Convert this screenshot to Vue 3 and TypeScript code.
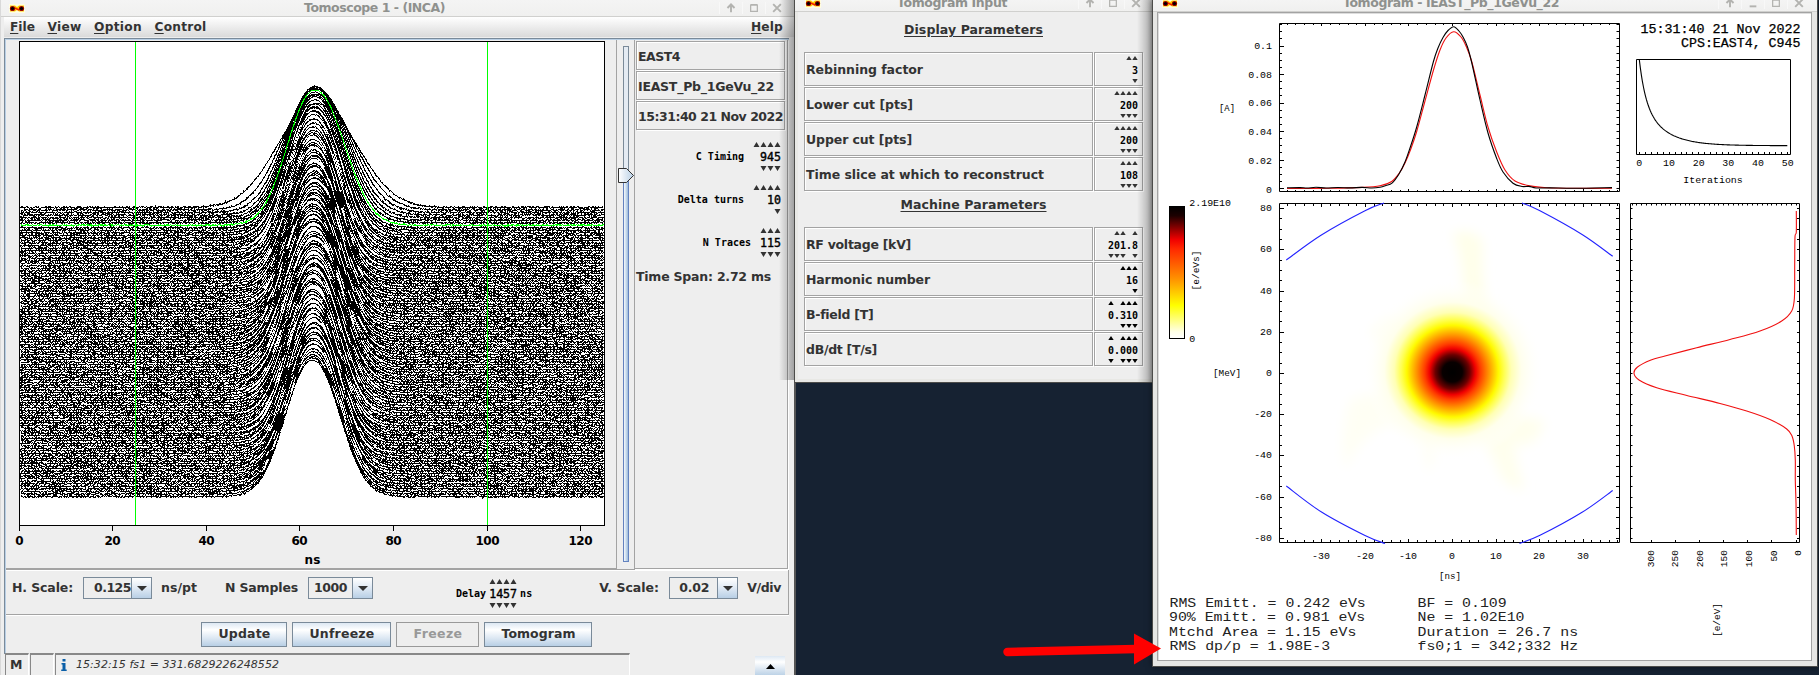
<script setup lang="ts">
type Pt = [number, number]

// Adjusts letter spacing so a label takes its nominal width in pixels.
const vFit = {
  mounted(el: HTMLElement, binding: { value: number }) {
    const n = (el.textContent || '').length
    const w = el.getBoundingClientRect().width
    if (n > 0) el.style.letterSpacing = `${(binding.value - w) / n}px`
  },
}

function makeRandom(seed: number) {
  let s = seed
  return () => {
    s = (s * 1664525 + 1013904223) % 4294967296
    return s / 4294967296
  }
}

// ---- waterfall display ----
const TRACES = 115
const GREEN = 7
const rnd = makeRandom(945)

// Small shot-to-shot variations of each trace.
const jitter = Array.from({ length: TRACES }, (_, i) => {
  const k = i < 10 || i > TRACES - 3 ? 0 : 1
  return { h: (rnd() - 0.5) * 4 * k, c: (rnd() - 0.5) * 0.9 * k, s: (rnd() - 0.5) * 0.9 * k }
})

function level(i: number, x: number): { y: number; g: number } {
  const base = 207 + i * 2.535
  const j = jitter[i]
  const early = Math.exp(-i / 2.2)
  const phase = (i / 62) * Math.PI * 2
  const centre = 313.6 + 2.5 * early + 0.8 * Math.sin(phase * 2) - i / TRACES + j.c
  const height = 135.5 - 33 * early + 1.2 * Math.cos(phase) + j.h
  const sl = 25.4 + 11.5 * Math.exp(-i / 1.6) + 1.2 * Math.cos(phase) + j.s
  const sr = 26 + 12 * Math.exp(-i / 3.6) + 1.2 * Math.cos(phase) + j.s
  const dx = x - centre
  const g = Math.exp(-Math.pow(Math.abs(dx) / ((dx < 0 ? sl : sr) * 1.414), 2.12))
  return { y: base - height * g, g }
}
function trace(i: number): string {
  let d = ''
  for (let k = 0; k < 1000; k++) {
    const x = 20 + Math.floor(k * 0.584)
    const { y, g } = level(i, x)
    const noise = (rnd() + rnd() - 1) * (i === GREEN ? 1 : 1.55) * (1 - Math.sqrt(g) * 0.6)
    d += `${k ? 'L' : 'M'}${x}.5 ${Math.round(y + noise)}.5`
  }
  return d
}
// Gap left open between two neighbouring traces on the steep flanks.
function gap(i: number): string {
  let d = ''
  let on = false
  let left = 0
  for (let x = 250; x < 380; x++) {
    if (left-- <= 0) {
      on = !on
      left = on ? 2 + rnd() * 8 : 1 + rnd() * 5
      if (on) d += `M${x}.5 ${Math.round(level(i, x).y + 1.3)}.5`
    } else if (on) d += `L${x}.5 ${Math.round(level(i, x).y + 1.3)}.5`
  }
  return d
}
const layers: { d: string; c: string }[] = []
for (let i = 0; i < TRACES; i++) {
  if (i === GREEN) continue
  layers.push({ d: trace(i), c: '#000' })
}
const GAP_STEPS = [3, 2, 4, 3, 2, 4, 5]
for (let i = 14, k = 0; i < TRACES - 2; i += GAP_STEPS[k++ % 7]) layers.push({ d: gap(i), c: '#fff' })
const greenTrace = trace(GREEN)

const scopeTicks = [
  { x: 19.5, t: '0' }, { x: 112.5, t: '20' }, { x: 206.5, t: '40' }, { x: 299.5, t: '60' },
  { x: 393.5, t: '80' }, { x: 487.5, t: '100' }, { x: 580.5, t: '120' },
]

const fields = [
  { t: 'EAST4', w: 42 }, { t: 'IEAST_Pb_1GeVu_22', w: 136 }, { t: '15:31:40 21 Nov 2022', w: 145 },
]
const dials = [
  { label: 'C Timing', value: '945', n: 4, up: '1111', down: '0111' },
  { label: 'Delta turns', value: '10', n: 4, up: '1111', down: '0001' },
  { label: 'N Traces', value: '115', n: 3, up: '111', down: '111' },
]

// ---- parameter window ----
const groups = [
  {
    title: 'Display Parameters', w: 139,
    rows: [
      { t: 'Rebinning factor', w: 117, v: '3', up: '11', down: '01', dark: false },
      { t: 'Lower cut [pts]', w: 107, v: '200', up: '1111', down: '0111', dark: false },
      { t: 'Upper cut [pts]', w: 106, v: '200', up: '1111', down: '0111', dark: false },
      { t: 'Time slice at which to reconstruct', w: 238, v: '108', up: '111', down: '111', dark: false },
    ],
  },
  {
    title: 'Machine Parameters', w: 146,
    rows: [
      { t: 'RF voltage [kV]', w: 105, v: '201.8', up: '01101', down: '11101', dark: false },
      { t: 'Harmonic number', w: 124, v: '16', up: '111', down: '001', dark: true },
      { t: 'B-field [T]', w: 67, v: '0.310', up: '10111', down: '00111', dark: true },
      { t: 'dB/dt [T/s]', w: 71, v: '0.000', up: '10111', down: '10111', dark: true },
    ],
  },
]

function arrows(mask: string, pitch: number, up: boolean, w: number, h: number): string {
  let d = ''
  for (let i = 0; i < mask.length; i++) {
    if (mask[i] !== '1') continue
    const x = i * pitch + (pitch - w) / 2
    d += up
      ? `M${x} ${h}L${x + w / 2} 0L${x + w} ${h}Z`
      : `M${x} 0L${x + w} 0L${x + w / 2} ${h}Z`
  }
  return d
}

// ---- tomogram plots ----
function smooth(p: Pt[]): string {
  let d = `M${p[0][0]} ${p[0][1]}`
  for (let i = 0; i < p.length - 1; i++) {
    const a = p[Math.max(0, i - 1)]
    const b = p[i]
    const c = p[i + 1]
    const e = p[Math.min(p.length - 1, i + 2)]
    d += `C${b[0] + (c[0] - a[0]) / 6} ${b[1] + (c[1] - a[1]) / 6} ${c[0] - (e[0] - b[0]) / 6} ${c[1] - (e[1] - b[1]) / 6} ${c[0]} ${c[1]}`
  }
  return d
}

const redProfile = smooth([
  [1287, 188.5], [1330, 188.3], [1363, 187.4], [1380, 185.8], [1391.7, 181.5], [1399, 173.5], [1405, 163],
  [1411, 148.5], [1416.7, 131.5], [1425, 101], [1433.5, 70], [1440, 50], [1446, 38], [1453.7, 31.7],
  [1461, 37], [1466, 46], [1471.7, 61.5], [1480, 95], [1488, 127], [1496.7, 152], [1505, 170],
  [1515, 181], [1530, 185.9], [1547, 187.7], [1575, 188.3], [1612, 188.3],
])
const blackProfile = smooth([
  [1287, 187.8], [1300, 187.6], [1307, 188], [1316, 187.3], [1326, 188], [1338, 187.5], [1350, 187.9], [1362, 187.4],
  [1372, 188], [1380, 187.2], [1386, 185.5], [1392, 183.2], [1399, 174], [1405, 162], [1410, 148], [1416.7, 127],
  [1425, 95], [1433.3, 62], [1438, 48], [1443, 37.5], [1448, 30.5], [1453.7, 26.7], [1459, 31],
  [1463.3, 37.5], [1467.5, 47], [1471.7, 62.5], [1480, 100], [1488, 133], [1496.7, 158.5], [1503, 172], [1513, 183.2],
  [1522, 186.5], [1529, 186.4], [1536, 188], [1550, 187.9], [1575, 188.3], [1612, 187.6],
])
const energyProfile = smooth([
  [1796.3, 211], [1796.3, 232], [1795, 237], [1794.7, 265], [1794.4, 298], [1791.7, 311], [1781.7, 321], [1760, 331],
  [1730, 339.5], [1696.7, 347.7], [1665, 356], [1651, 360], [1637.5, 367], [1634, 373.3], [1639, 380], [1656.7, 387.7],
  [1686, 395.2], [1720, 403.5], [1746.7, 411], [1770, 419.5], [1786.7, 429], [1792, 436], [1794.3, 446],
  [1795.3, 460], [1795.3, 480], [1796, 503], [1796.3, 535],
])
const convergence = 'M' + Array.from({ length: 149 }, (_, x) =>
  `${1639.3 + x} ${(145.7 - 86.2 * (0.45 * Math.exp(-x / 6) + 0.55 * Math.exp(-x / 22))).toFixed(2)}`).join('L')
const separatrix = [
  smooth([[1286.3, 260], [1321, 235.2], [1365, 210.7], [1384, 203]]),
  smooth([[1522, 203], [1539.5, 210.5], [1582.5, 234.7], [1612.7, 256.3]]),
  smooth([[1286.3, 486], [1321.5, 512], [1365, 535.5], [1385, 543.5]]),
  smooth([[1519.5, 543.5], [1540, 535.3], [1582.5, 512], [1612.7, 490.5]]),
]

const nsX = (v: number) => Math.round(1452 + v * 4.352) + 0.5
const mevY = (v: number) => Math.round(373 - v * 2.062) + 0.5
let ticks = ''
for (let v = -38; v <= 38; v += 2) {
  const x = nsX(v)
  const l = v % 10 === 0 ? 3 : 2
  ticks += `M${x} 24v${l - 1}M${x} 191v${-l + 1}M${x} 204v${l}M${x} 542v${-l}`
}
for (let v = -80; v <= 80; v += 5) {
  const y = mevY(v)
  const l = v % 20 === 0 ? 4 : 2
  ticks += `M1280 ${y}h${l}M1619 ${y}h-3M1631 ${y}h1.5M1799 ${y}h-2`
}
for (let k = 0; k <= 23; k++) {
  const y = Math.round(188 - k * 7.12) + 0.5
  ticks += `M1280 ${y}h${k % 4 === 0 ? 4 : 2}M1619 ${y}h-2.5`
}
for (let k = 0; k <= 34; k++) ticks += `M${Math.round(1795.5 - k * 4.82) + 0.5} 204v1.5`
for (let k = 0; k <= 6; k++) ticks += `M${Math.round(1795.5 - k * 24.1) + 0.5} 542v-2`
for (let k = 0; k <= 25; k++) ticks += `M${Math.round(1639 + k * 5.93) + 0.5} 154v-2`

type Lab = { x: number; y: number; t: string; w: number; a: string }
const small = (x: number, y: number, t: string, a: string): Lab => ({ x, y, t, w: t.length * 5.95, a })
const labels: Lab[] = [
  small(1272, 46, '0.1', 'end'), small(1272, 75, '0.08', 'end'), small(1272, 103, '0.06', 'end'),
  small(1272, 132, '0.04', 'end'), small(1272, 161, '0.02', 'end'), small(1272, 190, '0', 'end'),
  ...[80, 60, 40, 20, 0, -20, -40, -60, -80].map((v) => small(1272, mevY(v), String(v), 'end')),
  ...[-30, -20, -10].map((v) => small(nsX(v) - 0.5, 556, String(v), 'middle')),
  ...[0, 10, 20, 30].map((v) => small(nsX(v) - 0.5, 556, String(v), 'middle')),
  ...[0, 10, 20, 30, 40, 50].map((v) => small(1639.3 + v * 2.967, 163, String(v), 'middle')),
  small(1713, 180, 'Iterations', 'middle'),
  small(1189.3, 203, '2.19E10', 'start'), small(1189.3, 339, '0', 'start'),
]
const units: Lab[] = [
  { x: 1227, y: 108.5, t: '[A]', w: 16, a: 'middle' },
  { x: 1227, y: 373.5, t: '[MeV]', w: 28, a: 'middle' },
  { x: 1450, y: 576.5, t: '[ns]', w: 22, a: 'middle' },
]
const vertical = [
  { x: 1651.5, y: 558.7, t: '300', w: 17 }, { x: 1675.5, y: 558.7, t: '250', w: 17 },
  { x: 1700, y: 558.7, t: '200', w: 17 }, { x: 1724.5, y: 558.7, t: '150', w: 17 },
  { x: 1749, y: 558.7, t: '100', w: 17 }, { x: 1774, y: 556, t: '50', w: 11 }, { x: 1798.5, y: 553, t: '0', w: 5.5 },
  { x: 1196, y: 270.5, t: '[e/eVs]', w: 40 }, { x: 1717, y: 620, t: '[e/eV]', w: 34 },
]
const stats = [
  { x: 1169.5, y: 603, t: 'RMS Emitt. = 0.242 eVs' }, { x: 1169, y: 617, t: '90% Emitt. = 0.981 eVs' },
  { x: 1169, y: 632, t: 'Mtchd Area = 1.15 eVs' }, { x: 1169.5, y: 646, t: 'RMS dp/p = 1.98E-3' },
  { x: 1417.5, y: 603, t: 'BF = 0.109' }, { x: 1417.5, y: 617, t: 'Ne = 1.02E10' },
  { x: 1417.5, y: 632, t: 'Duration = 26.7 ns' }, { x: 1417.5, y: 646, t: 'fs0;1 = 342;332 Hz' },
]
const windows = [
  { id: 'scope', title: 'Tomoscope 1 - (INCA)', w: 141, min: false },
  { id: 'input', title: 'Tomogram Input', w: 110, min: false },
  { id: 'tomo', title: 'Tomogram - IEAST_Pb_1GeVu_22', w: 216, min: true },
]
</script>

<template>
  <div class="desktop">
    <section v-for="win in windows" :key="win.id" class="window" :class="win.id">
      <header class="titlebar">
        <svg class="logo" width="16" height="9" viewBox="0 0 16 9">
          <rect width="16" height="9" fill="#fffde0" />
          <path d="M1 1.5h5l2 1.5l2-1.5h5v6h-5l-2-1.5l-2 1.5h-5z" fill="#ffd000" />
          <path d="M6 4l4 2" stroke="#f52000" stroke-width="1.5" />
          <circle cx="3.5" cy="4.5" r="2.6" fill="#900" /><circle cx="12.5" cy="4.5" r="2.6" fill="#900" />
          <circle cx="3.5" cy="4.5" r="1.6" fill="#000" /><circle cx="12.5" cy="4.5" r="1.6" fill="#000" />
        </svg>
        <span class="title"><b v-fit="win.w">{{ win.title }}</b></span>
        <span class="wbtns">
          <svg width="23" height="12" viewBox="0 0 23 12"><path d="M11.5 2.2v8.3M7.8 6l3.7-3.7L15.2 6" /></svg>
          <svg v-if="win.min" width="23" height="12" viewBox="0 0 23 12"><path d="M8 9.5h7" /></svg>
          <svg width="23" height="12" viewBox="0 0 23 12"><path d="M8 3h7v6.500h-7zM8 2.500h7" stroke-width="1.300" /></svg>
          <svg width="23" height="12" viewBox="0 0 23 12"><path d="M7.500 2l8 8M15.500 2l-8 8" /></svg>
        </span>
      </header>

      <template v-if="win.id === 'scope'">
        <nav class="menu">
          <span v-fit="25"><u>F</u>ile</span>
          <span v-fit="34"><u>V</u>iew</span>
          <span v-fit="48"><u>O</u>ption</span>
          <span v-fit="52"><u>C</u>ontrol</span>
          <span v-fit="32" class="help"><u>H</u>elp</span>
        </nav>
        <div class="scope-body">
          <div class="upper">
            <svg class="wave" width="610" height="528" viewBox="6 40 610 528">
              <rect x="19.500" y="41.500" width="585" height="484" fill="#fff" stroke="#000" />
              <g fill="none" shape-rendering="crispEdges">
                <path v-for="(l, i) in layers" :key="i" :d="l.d" :stroke="l.c" />
              </g>
              <path :d="greenTrace" fill="none" stroke="#0f0" shape-rendering="crispEdges" />
              <path d="M135.500 42V525M487.500 42V525" stroke="#0f0" />
              <path d="M19.500 41V526M604.500 41V526" stroke="#000" />
              <g v-for="t in scopeTicks" :key="t.t">
                <path :d="`M${t.x} 526v5`" stroke="#000" />
                <text :x="t.x" y="545" text-anchor="middle" class="axis" :textLength="t.t.length * 8">{{ t.t }}</text>
              </g>
              <text x="312.500" y="564" text-anchor="middle" class="axis" textLength="16">ns</text>
            </svg>
            <svg class="slider" width="17" height="528" viewBox="617 40 17 528">
              <defs>
                <linearGradient id="thumb"><stop offset="0" stop-color="#fff" /><stop offset="1" stop-color="#b8cfe5" /></linearGradient>
                <linearGradient id="track"><stop offset="0" stop-color="#fff" /><stop offset=".4" stop-color="#d6e4f2" /><stop offset="1" stop-color="#8fb2d8" /></linearGradient>
              </defs>
              <rect x="623.500" y="46.500" width="5" height="515" fill="#e4ebf3" stroke="#7a8a99" />
              <rect x="623.500" y="176.500" width="5" height="385" fill="url(#track)" stroke="#6382bf" />
              <path d="M618.500 168.500h8l7 7l-7 7h-8z" fill="url(#thumb)" stroke="#333" />
            </svg>
            <div class="side">
              <div v-for="f in fields" :key="f.t" class="field"><span v-fit="f.w">{{ f.t }}</span></div>
              <div v-for="d in dials" :key="d.label" class="dial">
                <span class="dial-label">{{ d.label }}</span>
                <div class="digits">
                  <svg :width="d.n * 7" height="5"><path :d="arrows(d.up, 7, true, 6, 5)" /></svg>
                  <span class="num">{{ d.value }}</span>
                  <svg :width="d.n * 7" height="5"><path :d="arrows(d.down, 7, false, 6, 5)" /></svg>
                </div>
              </div>
              <div class="span"><span v-fit="135">Time Span: 2.72 ms</span></div>
            </div>
          </div>
          <div class="scales">
            <span v-fit="61" class="s1">H. Scale:</span>
            <div class="combo c1"><span v-fit="37">0.125</span><i><svg width="10" height="5"><path d="M0 0h10l-5 5z" /></svg></i></div>
            <span v-fit="36" class="s2">ns/pt</span>
            <span v-fit="73" class="s3">N Samples</span>
            <div class="combo c2"><span v-fit="33">1000</span><i><svg width="10" height="5"><path d="M0 0h10l-5 5z" /></svg></i></div>
            <div class="delay">
              <span class="dial-label">Delay</span>
              <div class="digits">
                <svg width="28" height="5"><path :d="arrows('1111', 7, true, 6, 5)" /></svg>
                <span class="num">1457</span>
                <svg width="28" height="5"><path :d="arrows('1111', 7, false, 6, 5)" /></svg>
              </div>
              <span class="dial-label ns">ns</span>
            </div>
            <span v-fit="60" class="s4">V. Scale:</span>
            <div class="combo c3"><span v-fit="30">0.02</span><i><svg width="10" height="5"><path d="M0 0h10l-5 5z" /></svg></i></div>
            <span v-fit="34" class="s5">V/div</span>
          </div>
          <div class="buttons">
            <button class="b1"><span v-fit="52">Update</span></button>
            <button class="b2"><span v-fit="65">Unfreeze</span></button>
            <button class="b3" disabled><span v-fit="49">Freeze</span></button>
            <button class="b4"><span v-fit="74">Tomogram</span></button>
          </div>
        </div>
        <footer class="status">
          <span class="cell m">M</span>
          <span class="cell blank"></span>
          <span class="cell msg">
            <svg width="6" height="12" viewBox="0 0 6 12"><path d="M1.500 0h3v2.500h-3zM.5 4h4v6.500h1.200v1.500h-5.500v-1.500h1.300v-5h-1z" fill="#0a5fa8" /></svg>
            <em v-fit="203">15:32:15 fs1 = 331.6829226248552</em>
          </span>
          <span class="expand"><svg width="9" height="5"><path d="M0 5h9l-4.500-5z" /></svg></span>
        </footer>
      </template>

      <div v-else-if="win.id === 'input'" class="params">
        <template v-for="g in groups" :key="g.title">
          <h2><span v-fit="g.w">{{ g.title }}</span></h2>
          <div v-for="r in g.rows" :key="r.t" class="prow">
            <div class="pname"><span v-fit="r.w">{{ r.t }}</span></div>
            <div class="pval" :class="{ dark: r.dark }">
              <svg :width="r.up.length * 6" height="4"><path :d="arrows(r.up, 6, true, 5.400, 4)" /></svg>
              <span>{{ r.v }}</span>
              <svg :width="r.down.length * 6" height="4"><path :d="arrows(r.down, 6, false, 5.400, 4)" /></svg>
            </div>
          </div>
        </template>
      </div>

      <svg v-else class="tomo-plot" width="653" height="647" viewBox="1158 13 653 647">
        <defs>
          <radialGradient id="beam" gradientUnits="userSpaceOnUse" cx="1453" cy="370" r="90" fx="1452.300" fy="372.300">
            <stop offset="0" stop-color="#000" /><stop offset=".11" stop-color="#080000" />
            <stop offset=".19" stop-color="#6a0000" /><stop offset=".255" stop-color="#f00000" />
            <stop offset=".31" stop-color="#ff3c00" /><stop offset=".4" stop-color="#ff9300" />
            <stop offset=".51" stop-color="#fffa00" /><stop offset=".57" stop-color="#ffff50" />
            <stop offset=".65" stop-color="#ffffb4" /><stop offset=".76" stop-color="#ffffec" />
            <stop offset="1" stop-color="#fff" stop-opacity="0" />
          </radialGradient>
          <linearGradient id="bar" x2="0" y2="1">
            <stop offset="0" stop-color="#000" /><stop offset=".07" stop-color="#1c0000" /><stop offset=".25" stop-color="#f00000" />
            <stop offset=".32" stop-color="#ff2800" /><stop offset=".55" stop-color="#ff9300" /><stop offset=".75" stop-color="#ff0" />
            <stop offset=".95" stop-color="#ffffe8" /><stop offset="1" stop-color="#fff" />
          </linearGradient>
          <filter id="haze" x="-50%" y="-50%" width="200%" height="200%"><feGaussianBlur stdDeviation="6" /></filter>
        </defs>
        <g fill="#fffff4" filter="url(#haze)">
          <path d="M1453 233q18-6 30 8q-3 40 8 80h-28q4-50-10-88z" fill="#ffffea" />
          <path d="M1490 400q35 20 55 20q-8 30-30 24q0 20 10 45q-16 0-24-12q-14-40-45-60z" fill="#ffffee" />
          <path d="M1425 390q-40-2-75 10q-12 40-4 70q10-30 40-45q20 0 35 10l8 40q10-30 8-60z" />
          <path d="M1390 315l35 25l-20 25q-25-15-35-35z" />
        </g>
        <circle cx="1453" cy="370" r="90" fill="url(#beam)" />
        <path :d="ticks" class="ink" />
        <path class="ink" d="M1279.500 23.500h340v168h-340zM1279.500 203.500h340v339h-340zM1630.500 203.500h169v339h-169zM1636.500 59.500h154v95h-154z" />
        <path v-for="(d, i) in separatrix" :key="i" :d="d" class="curve" stroke="#2222ff" />
        <path :d="redProfile" class="curve" stroke="#f01010" />
        <path :d="blackProfile" class="curve" stroke="#000" />
        <path :d="energyProfile" class="curve" stroke="#f01010" />
        <path :d="convergence" class="curve" stroke="#000" />
        <rect x="1169.500" y="206.500" width="15" height="132" fill="url(#bar)" stroke="#000" />
        <text x="1800.500" y="33" text-anchor="end" class="head" textLength="160" lengthAdjust="spacingAndGlyphs">15:31:40 21 Nov 2022</text>
        <text x="1800.500" y="46.500" text-anchor="end" class="head" textLength="119.500" lengthAdjust="spacingAndGlyphs">CPS:EAST4, C945</text>
        <text v-for="(l, i) in labels" :key="i" :x="l.x" :y="l.y + 2.800" :text-anchor="l.a" :textLength="l.w" lengthAdjust="spacingAndGlyphs" class="tiny">{{ l.t }}</text>
        <text v-for="l in units" :key="l.t" :x="l.x" :y="l.y + 2.800" :text-anchor="l.a" :textLength="l.w" lengthAdjust="spacingAndGlyphs" class="tiny">{{ l.t }}</text>
        <text v-for="l in vertical" :key="l.t" :transform="`translate(${l.x + 2.800} ${l.y}) rotate(-90)`" text-anchor="middle" :textLength="l.w" lengthAdjust="spacingAndGlyphs" class="tiny">{{ l.t }}</text>
        <text v-for="l in stats" :key="l.t" :x="l.x" :y="l.y + 3.500" :textLength="l.t.length * 8.920" lengthAdjust="spacingAndGlyphs" class="stat">{{ l.t }}</text>
      </svg>
    </section>

    <svg class="pointer" width="162" height="36" viewBox="1001 631 162 36">
      <path d="M1007.500 652L1136 649" stroke="#f00" stroke-width="8.500" stroke-linecap="round" />
      <path d="M1134 633.500L1161 648.500L1134 664.500z" fill="#f00" />
    </svg>
  </div>
</template>

<style>
body { margin: 0; overflow: hidden; }
</style>

<style scoped>
.desktop { position: relative; width: 1819px; height: 675px; overflow: hidden; background: #162232; font: bold 12.5px/1 "DejaVu Sans", sans-serif; color: #333; white-space: nowrap; }
.desktop *, .desktop *::before, .desktop *::after { box-sizing: border-box; }
.window { position: absolute; display: flex; flex-direction: column; background: #eee; }
svg { display: block; flex: none; }
u { text-decoration: underline; text-underline-offset: 2px; }
.titlebar { display: flex; align-items: center; flex: none; background: linear-gradient(#f4f4f4, #f0f0ef); border-bottom: 1px solid #d0d0ce; color: #8f918e; }
.title { flex: 1; }
.title b { display: inline-block; }
.wbtns { display: flex; }
.wbtns svg { fill: none; stroke: #b3b3b0; stroke-width: 2; border-left: 1px solid #f8f8f8; }

.scope { left: 0; top: 0; width: 796px; height: 675px; border-left: 1px solid #d9d9d9; border-right: 2px solid #555; }
.scope::after { content: ""; position: absolute; right: 0; top: 0; bottom: 295px; width: 15px; background: linear-gradient(90deg, transparent, rgba(0,0,0,.32)); }
.scope .titlebar { height: 17px; padding-left: 8px; }
.scope .title { padding-left: 279px; }
.scope .wbtns { padding-right: 6px; }
.menu { display: flex; height: 20px; flex: none; margin-left: 3px; padding: 3px 11px 0 6px; background: linear-gradient(#fff, #dadada); gap: 12.5px; line-height: 14px; font-size: 12.2px; }
.menu .help { margin-left: auto; }
.scope-body { margin-left: 3px; height: 616px; flex: none; border-top: 1px solid #7a8a99; border-left: 1px solid #7a8a99; box-shadow: inset 1px 1px #b8cfe5; margin-top: 1px; width: 785px; }
.upper { display: flex; height: 530px; padding: 1px 0 0 1px; }
.wave { background: #eee; border-right: 1px solid #a3a3a3; border-bottom: 1px solid #a3a3a3; width: 611px; height: 529px; }
.axis { font: bold 12px "DejaVu Sans", sans-serif; fill: #000; }
.side { width: 154px; height: 529px; border: solid #a3a3a3; border-width: 0 1px 1px 1px; padding: 1px 2px 0 1px; box-shadow: 1px 1px #fff; }
.field { height: 29px; border: 1px solid #a3a3a3; box-shadow: inset 1px 1px #fff, 1px 1px #fff; display: flex; align-items: center; padding: 3px 0 0 1px; margin-bottom: 1px; }
.dial { display: flex; justify-content: flex-end; align-items: center; margin-bottom: 14px; height: 29px; padding-right: 4px; }
.field + .dial { margin-top: 12px; }
.dial-label { font: bold 10px/12px "DejaVu Sans Mono", monospace; color: #000; }
.digits { margin-left: 9px; display: flex; flex-direction: column; align-items: flex-end; height: 29px; justify-content: space-between; }
.digits svg, .pval svg { fill: #333; }
.num { font: 11.620px/12px "DejaVu Sans Mono", monospace; color: #000; -webkit-text-stroke: .4px #000; }
.span { margin-top: 11px; }
.field + .field { margin-top: 1px; }
.scales { display: flex; height: 46px; width: 783px; margin: 0 0 0 1px; border: 1px solid #a3a3a3; border-left: 0; box-shadow: inset 0 1px #fff, 0 1px #fff; padding-top: 7px; line-height: 22px; }
.s1 { margin-left: 6px; }
.combo { display: flex; justify-content: flex-end; height: 22px; border: 1px solid #7a8a99; line-height: 20px; background: #eee; }
.combo i { display: flex; width: 20px; border-left: 1px solid #7a8a99; align-items: center; justify-content: center; background: linear-gradient(#fff, #dfe9f4 50%, #b8cfe5); }
.combo svg { fill: #333; }
.c1 { width: 69px; margin-left: 10px; }
.s2 { margin-left: 9px; }
.s3 { margin-left: 28px; }
.c2 { width: 65px; margin-left: 10px; }
.c2 span { margin-right: 5px; }
.delay { display: flex; align-items: center; height: 29px; margin: 2px 0 0 83px; }
.delay .digits { margin-left: 3px; }
.delay .ns { margin-left: 3px; }
.s4 { margin-left: 67px; }
.c3 { width: 69px; margin-left: 10px; }
.c3 span { margin-right: 8px; }
.s5 { margin-left: 9px; }
.buttons { display: flex; gap: 5px; padding: 7px 0 0 196px; }
button { height: 25px; padding: 0 0 0 1px; border: 1px solid #7a8a99; background: linear-gradient(#dde8f3, #fff 30%, #dde8f3 65%, #b8cfe5); color: #333; font: inherit; }
button[disabled] { background: #eee; border-color: #999; color: #999; }
.b1 { width: 86px; } .b2 { width: 99px; } .b3 { width: 83px; } .b4 { width: 108px; }
.status { display: flex; flex: 1; margin-left: 4px; line-height: 20px; margin-top: -1px; }
.cell { border-top: 2px solid #888; border-left: 1px solid #888; border-right: 1px solid #fff; height: 22px; }
.m { width: 24px; padding-left: 4px; margin-right: 1px; }
.blank { width: 24px; margin-right: 1px; }
.msg { width: 575px; display: flex; align-items: center; padding-left: 5px; }
.msg em { font-weight: normal; font-size: 11px; margin-left: 9px; }
.expand { margin: 3px 0 0 125px; width: 30px; height: 20px; background: linear-gradient(#dde8f3, #fff 30%, #b8cfe5); display: flex; align-items: center; justify-content: center; }

.input { left: 794px; top: 0; width: 360px; height: 383px; border: solid #4c4c4a; border-width: 0 1px 1px 1px; box-shadow: inset 3px -3px #e8e8e5; }
.input::after { content: ""; position: absolute; right: 0; top: 0; bottom: 0; width: 16px; background: linear-gradient(90deg, transparent, rgba(0,0,0,.3)); }
.input .titlebar { height: 12px; padding-left: 10px; }
.input .titlebar > *, .tomo .titlebar > * { margin-top: -5px; }
.input .title { padding-left: 76px; }
.input .wbtns { padding-right: 6px; }
.params { margin: 0 10px 0 9px; }
h2 { margin: 0; height: 40px; padding-top: 12px; font: inherit; text-align: center; text-decoration: underline; text-underline-offset: 2px; }
.prow + h2 { height: 35px; padding-top: 7px; }
.prow { display: grid; grid-template-columns: 289px 49px; gap: 1px; height: 34px; margin-bottom: 1px; }
.pname, .pval { border: 1px solid #a3a3a3; box-shadow: inset 1px 1px #fff, 1px 1px #fff; }
.pname { display: flex; align-items: center; padding-left: 1px; padding-top: 2px; }
.pval { display: flex; flex-direction: column; align-items: flex-end; justify-content: space-between; padding: 3px 4px 2px; font: bold 9.970px/12px "DejaVu Sans Mono", monospace; color: #000; }
.pval span { margin-top: 2px; }
.dark svg { fill: #000; }

.tomo { left: 1152px; top: 0; width: 666px; height: 667px; border: solid #4c4c4a; border-width: 0 1px 1px 1px; background: #e6e6e4; box-shadow: 0 0 6px rgba(0,0,0,.5); }
.tomo .titlebar { height: 12px; padding-left: 9px; }
.tomo .title { padding-left: 165px; }
.tomo .wbtns { padding-right: 7px; }
.tomo-plot { background: #fff; margin-left: 4px; border: 1px solid #a3a3a3; width: 655px; height: 649px; box-shadow: inset 1px 1px #ddd; }
.ink { fill: none; stroke: #000; }
.curve { fill: none; stroke-width: 1.1; }
text { fill: #000; }
.head { font: 12.200px "Liberation Mono", monospace; stroke: #000; stroke-width: .25; }
.tiny { font: 8.800px "Liberation Mono", monospace; }
.stat { font: 13.300px "Liberation Mono", monospace; fill: #222; }
.pointer { position: absolute; left: 1001px; top: 631px; }
</style>
